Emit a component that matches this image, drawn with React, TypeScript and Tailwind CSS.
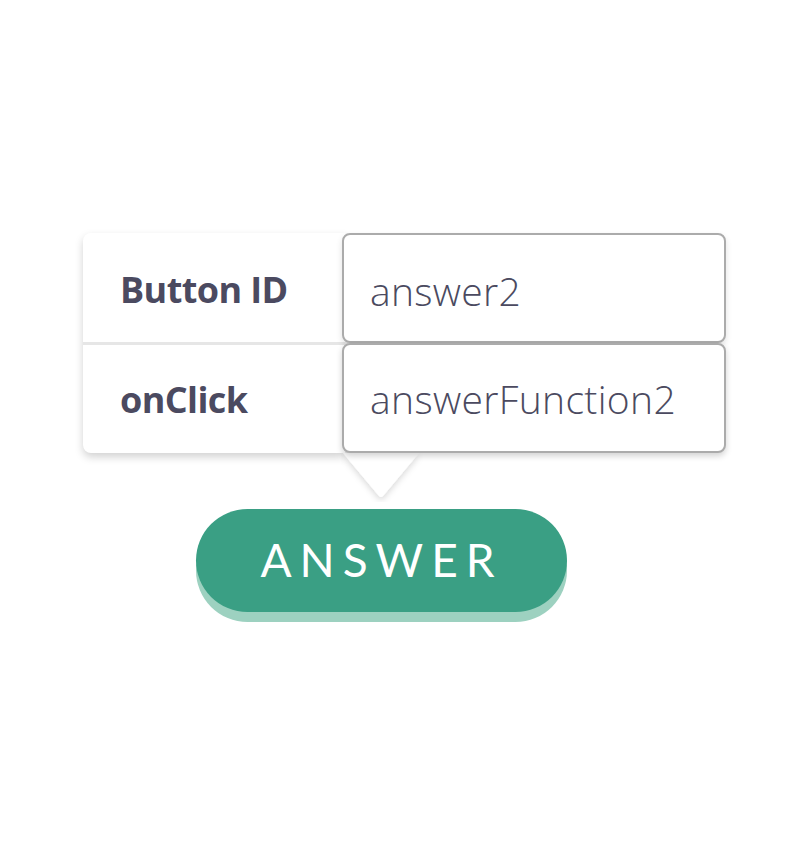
export default function App() {
  return (
    <div className="w-[809px] h-[855px] bg-white relative" style={{ fontFamily: '"Open Sans", sans-serif' }}>
      <div className="pt-[233px] pl-[83px]">
        <div className="relative flex w-[643px]">
          <div className="w-[262px] h-[220px] bg-white rounded-l-lg shadow-[0_4px_8px_rgba(0,0,0,0.18)] flex flex-col">
            <div className="h-[109px] flex items-center pl-[37px] pt-[5px] text-[36px] font-bold text-[#4b4a60] tracking-[-0.6px]">
              Button ID
            </div>
            <div className="h-[3px] bg-[#e6e6e6]" />
            <div className="h-[108px] flex items-center pl-[37px] pt-[2px] text-[36px] font-bold text-[#4b4a60] tracking-[-0.6px]">
              onClick
            </div>
          </div>
          <div className="relative z-10 -ml-[3px] w-[384px] flex flex-col">
            <div className="h-[110px] bg-white border-2 border-[#ababab] rounded-lg flex items-center pl-[26px] pt-[6px] text-[39px] font-light text-[#4b4a60] tracking-[0.3px] shadow-[0_3px_6px_rgba(0,0,0,0.12)]">
              answer2
            </div>
            <div className="h-[110px] bg-white border-2 border-[#ababab] rounded-lg flex items-center pl-[26px] pt-[3px] text-[39px] font-light text-[#4b4a60] tracking-[0.35px] shadow-[0_3px_6px_rgba(0,0,0,0.18)]">
              answerFunction2
            </div>
          </div>
          <svg className="absolute left-[258px] top-[219px]" width="82" height="50" viewBox="0 0 82 50">
            <defs>
              <filter id="s" x="-20%" y="-20%" width="140%" height="160%">
                <feDropShadow dx="0" dy="3" stdDeviation="3" floodColor="#000" floodOpacity="0.15" />
              </filter>
            </defs>
            <path d="M2 1 L78 1 L42 44 Q40 46 38 44 Z" fill="#fff" filter="url(#s)" />
          </svg>
        </div>
      </div>
      <div className="pl-[196px] pt-[56px]">
        <div className="w-[371px] h-[103px] rounded-full bg-[#3a9f84] shadow-[0_10px_0_#9dd1c0] flex items-center justify-center text-white text-[46px] font-normal tracking-[8px] pb-[2px]" style={{ fontFamily: 'Lato, sans-serif' }}>
          ANSWER
        </div>
      </div>
    </div>
  )
}
